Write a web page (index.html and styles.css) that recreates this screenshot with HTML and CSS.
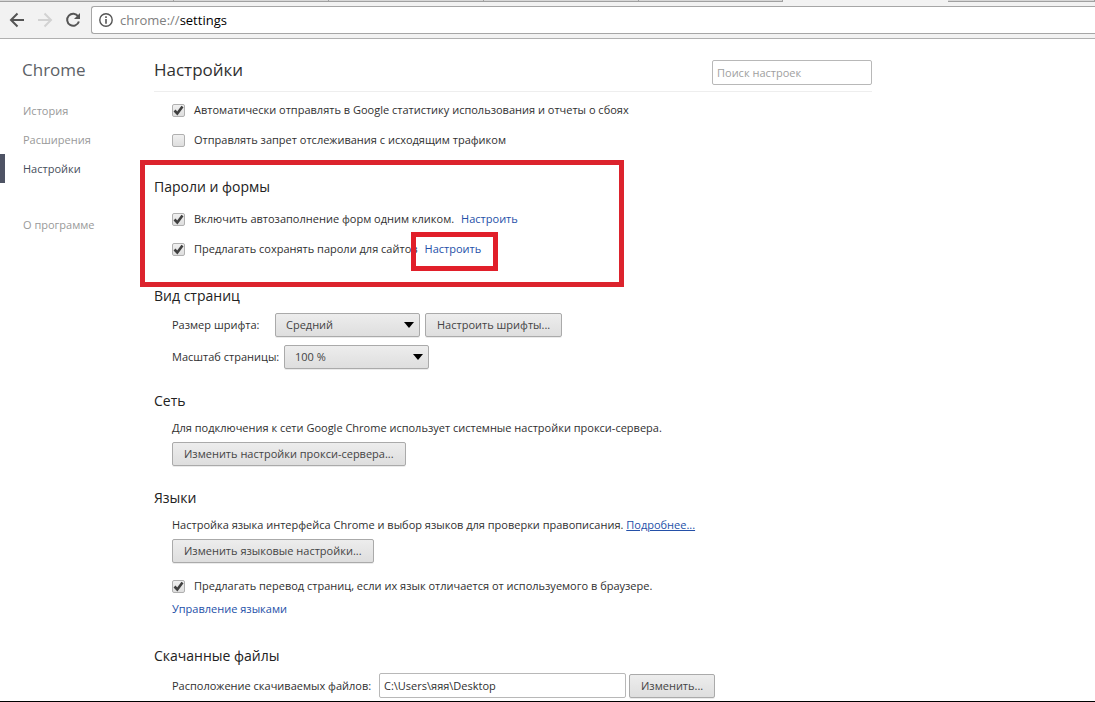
FILE: index.html
```html
<!DOCTYPE html>
<html lang="ru">
<head>
	<meta charset="UTF-8">
	<title>Настройки</title>
	<link rel="stylesheet" href="styles.css">
</head>
<body>
	<div class="browser">
		<div class="tabs">
			<span class="tab first"></span>
			<span class="tab"></span>
			<span class="tab"></span>
			<span class="tab"></span>
			<span class="tab"></span>
			<span class="tab act"></span>
			<span class="tab last"></span>
		</div>
		<div class="toolbar">
			<button class="nav" type="button" aria-label="Назад">
				<svg width="16" height="16" viewBox="0 0 16 16"><path d="M15 8H2M8.500 1.500L2 8l6.500 6.500" fill="none" stroke="#555" stroke-width="2"/></svg>
			</button>
			<button class="nav" type="button" aria-label="Вперед" disabled>
				<svg width="16" height="16" viewBox="0 0 16 16"><path d="M1 8h13M7.500 1.500L14 8l-6.500 6.500" fill="none" stroke="#d2d2d2" stroke-width="2"/></svg>
			</button>
			<button class="nav" type="button" aria-label="Обновить">
				<svg width="16" height="16" viewBox="0 0 16 16"><path d="M13.200 4.500A6 6 0 1 0 13.900 9.500" fill="none" stroke="#555" stroke-width="2"/><path d="M15 1v6H9z" fill="#555"/></svg>
			</button>
			<div class="address">
				<svg width="14" height="14" viewBox="0 0 14 14"><circle cx="7" cy="7" r="6.200" fill="none" stroke="#555" stroke-width="1.400"/><path d="M6.200 3.300h1.600v1.600H6.200zM6.200 6h1.600v4.700H6.200z" fill="#555"/></svg>
				<span class="url"><span class="scheme">chrome://</span>settings</span>
			</div>
		</div>
	</div>
	<div class="page">
		<div class="side">
			<h1>Chrome</h1>
			<ul class="menu">
				<li><a href="#">История</a></li>
				<li><a href="#">Расширения</a></li>
				<li class="act"><a href="#">Настройки</a></li>
				<li class="about"><a href="#">О программе</a></li>
			</ul>
		</div>
		<div class="main">
			<div class="head">
				<h2>Настройки</h2>
				<input class="search" type="search" placeholder="Поиск настроек" aria-label="Поиск настроек">
			</div>
			<div class="rows privacy">
				<div class="check"><label><input type="checkbox" checked>Автоматически отправлять в Google статистику использования и отчеты о сбоях</label></div>
				<div class="check"><label><input type="checkbox">Отправлять запрет отслеживания с исходящим трафиком</label></div>
			</div>
			<div class="section marked">
				<h3>Пароли и формы</h3>
				<div class="rows">
					<div class="check"><label><input type="checkbox" checked>Включить автозаполнение форм одним кликом.</label><a href="#">Настроить</a></div>
					<div class="check"><label><input type="checkbox" checked>Предлагать сохранять пароли для сайтов</label><span class="target"><a href="#">Настроить</a></span></div>
				</div>
			</div>
			<div class="section">
				<h3>Вид страниц</h3>
				<div class="rows">
					<div class="line font">
						<label for="size">Размер шрифта:</label>
						<select id="size"><option>Средний</option></select>
						<button class="btn" type="button">Настроить шрифты...</button>
					</div>
					<div class="line scale">
						<label for="zoom">Масштаб страницы:</label>
						<select id="zoom"><option>100 %</option></select>
					</div>
				</div>
			</div>
			<div class="section">
				<h3>Сеть</h3>
				<div class="rows">
					<p>Для подключения к сети Google Chrome использует системные настройки прокси-сервера.</p>
					<button class="btn" type="button">Изменить настройки прокси-сервера...</button>
				</div>
			</div>
			<div class="section">
				<h3>Языки</h3>
				<div class="rows">
					<p>Настройка языка интерфейса Chrome и выбор языков для проверки правописания. <a class="more" href="#">Подробнее...</a></p>
					<button class="btn" type="button">Изменить языковые настройки...</button>
					<div class="check translate"><label><input type="checkbox" checked>Предлагать перевод страниц, если их язык отличается от используемого в браузере.</label></div>
					<a class="manage" href="#">Управление языками</a>
				</div>
			</div>
			<div class="section">
				<h3>Скачанные файлы</h3>
				<div class="rows">
					<div class="line folder">
						<label for="path">Расположение скачиваемых файлов:</label>
						<input id="path" class="path" type="text" value="C:\Users\яяя\Desktop">
						<button class="btn" type="button">Изменить...</button>
					</div>
				</div>
			</div>
		</div>
	</div>
</body>
</html>
```
FILE: styles.css
```css
*, *::after{
	box-sizing: border-box;
}
body{
	margin: 0;
	min-height: 100vh;
	display: flex;
	flex-direction: column;
	font: 11px/20px "Open Sans", "Noto Sans", sans-serif;
	color: #303030;
	background: #fff;
	border-bottom: 1px solid #000;
}
ul{
	list-style: none;
	margin: 0;
	padding: 0;
}
h1, h2, h3, p{
	margin: 0;
	font-weight: normal;
}
a{
	color: #2450a8;
	text-decoration: none;
}
input, select, button{
	font: inherit;
	color: inherit;
	margin: 0;
}

/* browser top */
.browser{
	background: #f2f2f2;
	border-bottom: 1px solid #b0b0b0;
}
.tabs{
	display: flex;
	height: 2px;
}
.tab{
	width: 155px;
	background: #d8d8d8;
	border-bottom: 1px solid #a0a0a0;
	border-right: 1px solid #a0a0a0;
}
.tabs .first{
	width: 174px;
}
.tabs .act{
	width: 165px;
	background: #f2f2f2;
	border: 0;
}
.tabs .last{
	flex: 1;
}
.tabs .tab:nth-child(5){
	width: 144px;
}
.toolbar{
	display: flex;
	align-items: center;
	gap: 12px;
	height: 36px;
	padding-left: 9px;
}
.nav{
	display: flex;
	padding: 0;
	border: 0;
	background: none;
}
.address{
	flex: 1;
	display: flex;
	align-items: center;
	gap: 7px;
	height: 28px;
	margin-left: -2px;
	padding-left: 7px;
	border: 1px solid #a6a6a6;
	border-right: 0;
	border-radius: 3px 0 0 3px;
	background: #fff;
}
.url{
	font-size: 13px;
	color: #000;
}
.scheme{
	color: #808080;
}

/* page */
.page{
	flex: 1;
	display: flex;
}
.side{
	width: 154px;
	padding-top: 19px;
}
.side h1{
	padding-left: 22px;
	font-size: 17px;
	line-height: 24px;
	color: #5c6166;
}
.menu{
	padding-top: 14px;
}
.menu li{
	height: 29px;
	padding-left: 18px;
	line-height: 29px;
	border-left: 5px solid transparent;
}
.menu a{
	color: #999;
}
.menu .act{
	border-color: #4e5364;
}
.menu .act a{
	color: #464e5a;
}
.menu .about{
	margin-top: 27px;
}
.main{
	flex: 1;
	max-width: 718px;
}
.head{
	display: flex;
	justify-content: space-between;
	align-items: flex-start;
	height: 53px;
	padding-top: 19px;
	border-bottom: 1px solid #eee;
}
.head h2{
	font-size: 17px;
	line-height: 24px;
}
.search{
	width: 160px;
	height: 25px;
	margin-top: 2px;
	padding: 0 4px;
	border: 1px solid #b8b8b8;
	border-radius: 2px;
	appearance: none;
}
.search::placeholder{
	color: #a0a0a0;
}
.privacy{
	padding-top: 3px;
}
.rows{
	padding-left: 18px;
}
.section{
	position: relative;
	padding-top: 20px;
}
.section h3{
	margin-bottom: 5px;
	font-size: 14px;
	line-height: 24px;
	color: #222;
}
.check{
	display: flex;
	align-items: center;
	gap: 7px;
	height: 30px;
}
.check label{
	display: flex;
	align-items: center;
	gap: 9px;
}
.check input{
	width: 13px;
	height: 13px;
	appearance: none;
	border: 1px solid #b0b0b0;
	border-radius: 2px;
	background: linear-gradient(#f0f0f0, #dedede);
}
.check input:checked{
	background: url("data:image/svg+xml,%3Csvg xmlns='http://www.w3.org/2000/svg' viewBox='0 0 11 11'%3E%3Cpath d='M1.500 5.500l2.800 3L9.500 1.500' fill='none' stroke='%23404040' stroke-width='2.600'/%3E%3C/svg%3E"), linear-gradient(#f0f0f0, #dedede);
}
.line{
	display: flex;
	align-items: center;
	gap: 3px;
}
.line + .line{
	margin-top: 8px;
}
.font{
	gap: 5px;
}
.font label{
	width: 98px;
}
.scale label{
	width: 109px;
}
.folder label{
	width: 204px;
}
select, .btn{
	height: 24px;
	border: 1px solid #aaa;
	border-radius: 2px;
	background: linear-gradient(#ededed, #dedede);
	box-shadow: 0 1px 0 rgba(0,0,0,.08);
	color: #444;
	line-height: 20px;
}
select{
	width: 145px;
	padding: 0 10px;
	appearance: none;
	background: url("data:image/svg+xml,%3Csvg xmlns='http://www.w3.org/2000/svg' width='10' height='6'%3E%3Cpath d='M0 0h10L5 6z'/%3E%3C/svg%3E") no-repeat right 5px center, linear-gradient(#ededed, #dedede);
}
.btn{
	padding: 0 11px;
}
p + .btn{
	display: block;
	margin-top: 4px;
}
.more{
	text-decoration: underline;
}
.translate{
	margin-top: 8px;
}
.manage{
	display: block;
	margin: -2px 0 5px;
}
.path{
	width: 247px;
	height: 25px;
	padding: 0 4px;
	border: 1px solid #b8b8b8;
	border-radius: 2px;
}

/* red frames over the passwords block */
.marked::after{
	content: "";
	position: absolute;
	top: 5px;
	left: -14px;
	width: 484px;
	height: 127px;
	border: 5px solid #dc232d;
	pointer-events: none;
}
.target{
	position: relative;
}
.target::after{
	content: "";
	position: absolute;
	top: -7px;
	left: -14px;
	right: -17px;
	height: 39px;
	border: 5px solid #e11f2a;
	pointer-events: none;
}
```
